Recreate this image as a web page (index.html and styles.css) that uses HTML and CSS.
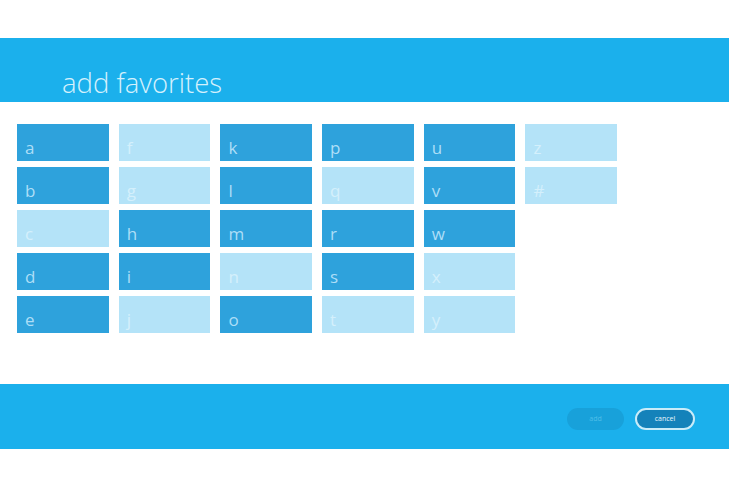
FILE: index.html
```html
<!DOCTYPE html>
<html>
<head>
<meta charset="utf-8">
<link rel="stylesheet" href="styles.css">
</head>
<body>
<div class="page">
  <header class="top-band">
    <h1 class="title">add favorites</h1>
  </header>
  <main class="content">
    <div class="grid">
      <div class="tile dark">a</div>
      <div class="tile dark">b</div>
      <div class="tile light">c</div>
      <div class="tile dark">d</div>
      <div class="tile dark">e</div>
      <div class="tile light">f</div>
      <div class="tile light">g</div>
      <div class="tile dark">h</div>
      <div class="tile dark">i</div>
      <div class="tile light">j</div>
      <div class="tile dark">k</div>
      <div class="tile dark">l</div>
      <div class="tile dark">m</div>
      <div class="tile light">n</div>
      <div class="tile dark">o</div>
      <div class="tile dark">p</div>
      <div class="tile light">q</div>
      <div class="tile dark">r</div>
      <div class="tile dark">s</div>
      <div class="tile light">t</div>
      <div class="tile dark">u</div>
      <div class="tile dark">v</div>
      <div class="tile dark">w</div>
      <div class="tile light">x</div>
      <div class="tile light">y</div>
      <div class="tile light">z</div>
      <div class="tile light">#</div>
    </div>
  </main>
  <footer class="bottom-band">
    <button class="btn btn-add">add</button>
    <button class="btn btn-cancel">cancel</button>
  </footer>
</div>
</body>
</html>
```
FILE: styles.css
```css
html, body {
  margin: 0;
  padding: 0;
  background: #ffffff;
}
body {
  font-family: "Open Sans", "Noto Sans", "DejaVu Sans", sans-serif;
  width: 729px;
  height: 486px;
  overflow: hidden;
}
.page {
  padding-top: 38px;
}
.top-band {
  height: 64px;
  background: #1bb0ec;
  display: flex;
  align-items: flex-end;
  padding-left: 62px;
  box-sizing: border-box;
}
.title {
  margin: 0 0 2px 0;
  font-size: 27.5px;
  font-weight: 300;
  color: #d5f1fd;
  line-height: 34px;
  letter-spacing: 0;
}
.content {
  height: 282px;
  box-sizing: border-box;
  padding: 22px 0 0 17px;
}
.grid {
  display: grid;
  grid-auto-flow: column;
  grid-template-rows: repeat(5, 37px);
  grid-auto-columns: 91.7px;
  column-gap: 10px;
  row-gap: 6px;
}
.tile {
  display: flex;
  align-items: flex-end;
  padding: 0 0 3px 8px;
  box-sizing: border-box;
  font-size: 17px;
  line-height: 20px;
}
.dark {
  background: #2ea2dc;
  color: #addef7;
}
.light {
  background: #b4e3f8;
  color: #d4f0fc;
}
.bottom-band {
  height: 65px;
  background: #1bb0ec;
  display: flex;
  align-items: center;
  justify-content: flex-end;
  padding-right: 34px;
  gap: 11px;
  box-sizing: border-box;
}
.btn {
  height: 22px;
  border-radius: 11px;
  font-family: "Open Sans", "Noto Sans", sans-serif;
  font-size: 7px;
  padding: 0;
  margin-top: 4px;
}
.btn-add {
  width: 57px;
  background: #18a1da;
  border: none;
  color: #4fbfe8;
}
.btn-cancel {
  width: 60px;
  background: #1482ba;
  border: 2px solid #c9ecf9;
  color: #e8f6fc;
}
```
